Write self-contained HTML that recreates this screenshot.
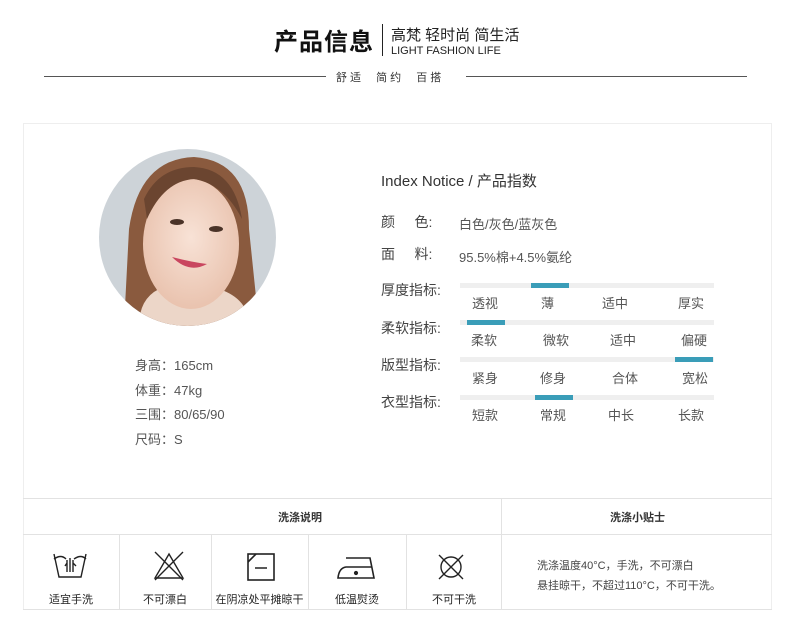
<!DOCTYPE html>
<html><head><meta charset="utf-8"><style>
*{margin:0;padding:0;box-sizing:border-box}
body{width:790px;height:630px;background:#fff;position:relative;overflow:hidden;font-family:"Liberation Sans","Noto Sans CJK SC",sans-serif;color:#333}
.a{position:absolute;white-space:nowrap}
.t{font-size:13px;color:#555}
.bar{position:absolute;left:460px;width:254px;height:5px;background:#efefef}
.hl{position:absolute;height:5px;background:#3a9db8;top:0}
.lab{position:absolute;font-size:14px;color:#444}
.opt{position:absolute;font-size:13px;color:#555}
.ln{position:absolute;background:#e2e2e2}
.ic{position:absolute;font-size:11px;color:#222;text-align:center}
</style></head><body>
<div class="a" style="left:274px;top:22px;font-size:24px;font-weight:bold;color:#111;letter-spacing:1px">产品信息</div>
<div class="a" style="left:382px;top:24px;width:1px;height:32px;background:#222"></div>
<div class="a" style="left:391px;top:24px;font-size:15px;color:#222">高梵 轻时尚 简生活</div>
<div class="a" style="left:391px;top:45px;font-size:11px;color:#222">LIGHT FASHION LIFE</div>
<div class="a" style="left:44px;top:76px;width:282px;height:1px;background:#555"></div>
<div class="a" style="left:466px;top:76px;width:281px;height:1px;background:#555"></div>
<div class="a" style="left:336px;top:69px;font-size:11px;color:#333;letter-spacing:3px">舒适&nbsp;&nbsp;简约&nbsp;&nbsp;百搭</div>

<div class="a" style="left:23px;top:123px;width:749px;height:487px;border:1px solid #eee"></div>

<svg class="a" style="left:99px;top:149px" width="177" height="177" viewBox="0 0 177 177">
<defs><clipPath id="c"><circle cx="88.5" cy="88.5" r="88.5"/></clipPath>
<radialGradient id="sk" cx="0.5" cy="0.45" r="0.6"><stop offset="0" stop-color="#f8e2d6"/><stop offset="1" stop-color="#e8c0ab"/></radialGradient></defs>
<g clip-path="url(#c)">
<rect width="177" height="177" fill="#cdd3d8"/>
<path d="M25 177 L30 80 Q40 10 95 8 Q150 12 150 80 L160 177 Z" fill="#8a5a3e"/>
<path d="M40 177 Q40 150 60 140 L120 140 Q150 150 150 177 Z" fill="#ecd6c8"/>
<ellipse cx="92" cy="95" rx="48" ry="65" fill="url(#sk)"/>
<path d="M45 50 Q60 18 95 18 Q135 20 143 70 Q125 35 95 30 Q65 32 48 70 Z" fill="#6b4530"/>
<ellipse cx="78" cy="73" rx="7" ry="3" fill="#4a3328"/>
<ellipse cx="117" cy="80" rx="7" ry="3" fill="#4a3328"/>
<path d="M73 108 Q90 125 108 115 Q92 113 73 108Z" fill="#c9465f"/>
</g></svg>

<div class="a t" style="left:135px;top:355px">身高：165cm</div>
<div class="a t" style="left:135px;top:380px">体重：47kg</div>
<div class="a t" style="left:135px;top:404px">三围：80/65/90</div>
<div class="a t" style="left:135px;top:429px">尺码：S</div>

<div class="a" style="left:381px;top:170px;font-size:15px;color:#333">Index Notice / 产品指数</div>
<div class="a" style="left:381px;top:212px;font-size:14px;color:#444">颜&nbsp;&nbsp;&nbsp;&nbsp;&nbsp;色:</div>
<div class="a t" style="left:459px;top:214px">白色/灰色/蓝灰色</div>
<div class="a" style="left:381px;top:244px;font-size:14px;color:#444">面&nbsp;&nbsp;&nbsp;&nbsp;&nbsp;料:</div>
<div class="a t" style="left:459px;top:247px">95.5%棉+4.5%氨纶</div>

<div class="lab" style="left:381px;top:280px">厚度指标:</div>
<div class="bar" style="top:283px"><div class="hl" style="left:71px;width:38px"></div></div>
<div class="opt" style="left:472px;top:293px">透视</div><div class="opt" style="left:541px;top:293px">薄</div><div class="opt" style="left:602px;top:293px">适中</div><div class="opt" style="left:678px;top:293px">厚实</div>

<div class="lab" style="left:381px;top:318px">柔软指标:</div>
<div class="bar" style="top:320px"><div class="hl" style="left:7px;width:38px"></div></div>
<div class="opt" style="left:471px;top:330px">柔软</div><div class="opt" style="left:543px;top:330px">微软</div><div class="opt" style="left:610px;top:330px">适中</div><div class="opt" style="left:681px;top:330px">偏硬</div>

<div class="lab" style="left:381px;top:355px">版型指标:</div>
<div class="bar" style="top:357px"><div class="hl" style="left:215px;width:38px"></div></div>
<div class="opt" style="left:472px;top:368px">紧身</div><div class="opt" style="left:540px;top:368px">修身</div><div class="opt" style="left:612px;top:368px">合体</div><div class="opt" style="left:682px;top:368px">宽松</div>

<div class="lab" style="left:381px;top:392px">衣型指标:</div>
<div class="bar" style="top:395px"><div class="hl" style="left:75px;width:38px"></div></div>
<div class="opt" style="left:472px;top:405px">短款</div><div class="opt" style="left:540px;top:405px">常规</div><div class="opt" style="left:608px;top:405px">中长</div><div class="opt" style="left:678px;top:405px">长款</div>

<div class="ln" style="left:23px;top:498px;width:749px;height:1px"></div>
<div class="ln" style="left:23px;top:534px;width:749px;height:1px"></div>
<div class="ln" style="left:23px;top:609px;width:749px;height:1px"></div>
<div class="ln" style="left:501px;top:498px;width:1px;height:112px"></div>
<div class="ln" style="left:119px;top:534px;width:1px;height:76px"></div>
<div class="ln" style="left:211px;top:534px;width:1px;height:76px"></div>
<div class="ln" style="left:308px;top:534px;width:1px;height:76px"></div>
<div class="ln" style="left:406px;top:534px;width:1px;height:76px"></div>
<div class="a" style="left:278px;top:509px;font-size:11px;font-weight:bold;color:#333">洗涤说明</div>
<div class="a" style="left:610px;top:509px;font-size:11px;font-weight:bold;color:#333">洗涤小贴士</div>

<svg class="a" style="left:53px;top:551px" width="36" height="28" viewBox="0 0 36 28" fill="none" stroke="#222" stroke-width="1.4">
<path d="M1 3 L6 26 L28 26 L33 3"/><path d="M1 8 Q8 3 13 8 M21 8 Q28 3 33 8"/>
<path d="M14 21 L14 9 M17 21 L17 7 M20 21 L20 9 M12 15 L14 12 M23 15 L20 12"/></svg>
<svg class="a" style="left:153px;top:551px" width="32" height="30" viewBox="0 0 32 30" fill="none" stroke="#222" stroke-width="1.4">
<path d="M16 3 L30 27 L2 27 Z"/><path d="M2 1 L30 29 M30 1 L2 29"/></svg>
<svg class="a" style="left:247px;top:553px" width="28" height="28" viewBox="0 0 28 28" fill="none" stroke="#222" stroke-width="1.6">
<rect x="1" y="1" width="26" height="26"/><path d="M1 9 L9 1 M8 15 L20 15"/></svg>
<svg class="a" style="left:336px;top:556px" width="40" height="24" viewBox="0 0 40 24" fill="none" stroke="#222" stroke-width="1.6">
<path d="M10 2 L34 2 L38 22 L2 22 Q3 12 10 11 L36 11"/><circle cx="20" cy="17" r="1.3" fill="#222"/></svg>
<svg class="a" style="left:436px;top:552px" width="30" height="30" viewBox="0 0 30 30" fill="none" stroke="#222" stroke-width="1.4">
<circle cx="15" cy="15" r="10"/><path d="M3 3 L27 27 M27 3 L3 27"/></svg>
<div class="ic" style="left:23px;top:591px;width:96px">适宜手洗</div>
<div class="ic" style="left:119px;top:591px;width:92px">不可漂白</div>
<div class="ic" style="left:211px;top:591px;width:97px">在阴凉处平摊晾干</div>
<div class="ic" style="left:308px;top:591px;width:98px">低温熨烫</div>
<div class="ic" style="left:406px;top:591px;width:96px">不可干洗</div>
<div class="a" style="left:537px;top:557px;font-size:11px;color:#444">洗涤温度40°C，手洗，不可漂白</div>
<div class="a" style="left:537px;top:577px;font-size:11px;color:#444">悬挂晾干，不超过110°C，不可干洗。</div>
</body></html>
